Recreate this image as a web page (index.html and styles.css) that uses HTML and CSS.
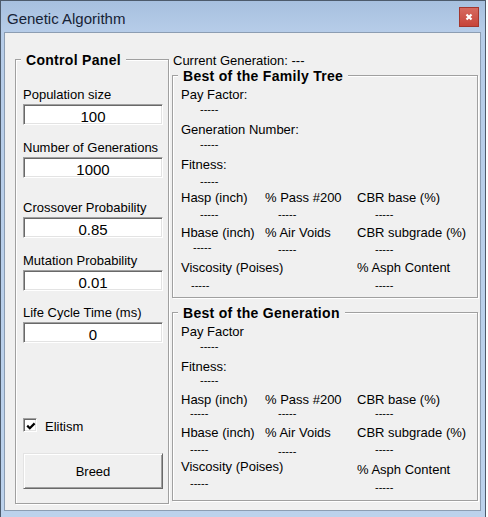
FILE: index.html
```html
<!DOCTYPE html>
<html>
<head>
<meta charset="utf-8">
<title>Genetic Algorithm</title>
<link rel="stylesheet" href="styles.css">
</head>
<body>
<div class="window">
  <div class="titlebar">
    <span class="title">Genetic Algorithm</span>
    <span class="close"><svg width="18" height="18" viewBox="0 0 18 18"><path d="M6.5 6.5 L11.5 11.5 M11.5 6.5 L6.5 11.5" stroke="#fff" stroke-width="2.2" fill="none"/></svg></span>
  </div>
  <div class="client">
    <section class="group control">
      <div class="group-title">Control Panel</div>
      <div class="field f1"><div class="flabel">Population size</div><div class="textbox">100</div></div>
      <div class="field f2"><div class="flabel">Number of Generations</div><div class="textbox">1000</div></div>
      <div class="field f3"><div class="flabel">Crossover Probability</div><div class="textbox">0.85</div></div>
      <div class="field f4"><div class="flabel">Mutation Probability</div><div class="textbox">0.01</div></div>
      <div class="field f5"><div class="flabel">Life Cycle Time (ms)</div><div class="textbox">0</div></div>
      <div class="check-row">
        <span class="checkbox"><svg width="10" height="10" viewBox="0 0 10 10"><path d="M1.2 4.6 L3.8 7.2 L8.6 2.4" stroke="#000" stroke-width="2.2" fill="none"/></svg></span>
        <span class="check-label">Elitism</span>
      </div>
      <button class="btn">Breed</button>
    </section>

    <div class="results">
      <div class="cur-gen">Current Generation: ---</div>

      <section class="group family">
        <div class="group-title">Best of the Family Tree</div>
        <div class="stat mt2"><div class="lbl">Pay Factor:</div><div class="val ind19">-----</div></div>
        <div class="stat mt5"><div class="lbl">Generation Number:</div><div class="val ind19">-----</div></div>
        <div class="stat mt5"><div class="lbl">Fitness:</div><div class="val ind19 mt2">-----</div></div>
        <div class="row3 mt1">
          <div class="lbl">Hasp (inch)</div><div class="lbl">% Pass #200</div><div class="lbl">CBR base (%)</div>
          <div class="val ind19 mt2">-----</div><div class="val ind13 mt2">-----</div><div class="val ind18 mt2">-----</div>
        </div>
        <div class="row3 mt3">
          <div class="lbl">Hbase (inch)</div><div class="lbl">% Air Voids</div><div class="lbl">CBR subgrade (%)</div>
          <div class="val ind12">-----</div><div class="val ind13 mt2">-----</div><div class="val ind18 mt2">-----</div>
        </div>
        <div class="row3 mt3">
          <div class="lbl span2">Viscosity (Poises)</div><div class="lbl">% Asph Content</div>
          <div class="val ind10 mt3">-----</div><div class="val ind18 mt3 c3">-----</div>
        </div>
      </section>

      <section class="group generation">
        <div class="group-title">Best of the Generation</div>
        <div class="stat mt2"><div class="lbl">Pay Factor</div><div class="val ind19">-----</div></div>
        <div class="stat mt5"><div class="lbl">Fitness:</div><div class="val ind19 mn1">-----</div></div>
        <div class="row3 mt4">
          <div class="lbl">Hasp (inch)</div><div class="lbl">% Pass #200</div><div class="lbl">CBR base (%)</div>
          <div class="val ind9 mn1">-----</div><div class="val ind13 mn1">-----</div><div class="val ind18 mn1">-----</div>
        </div>
        <div class="row3 mt4">
          <div class="lbl">Hbase (inch)</div><div class="lbl">% Air Voids</div><div class="lbl">CBR subgrade (%)</div>
          <div class="val ind9 mt2">-----</div><div class="val ind13 mt4">-----</div><div class="val ind18 mt2">-----</div>
        </div>
        <div class="row3">
          <div class="lbl span2">Viscosity (Poises)</div><div class="lbl mt3">% Asph Content</div>
          <div class="val ind9 mn1">-----</div><div class="val ind18 mt3 c3">-----</div>
        </div>
      </section>
    </div>
  </div>
</div>
</body>
</html>
```

FILE: styles.css
```css
* { box-sizing: border-box; }

body {
  margin: 0;
  background: #ffffff;
  font-family: "Liberation Sans", Arial, sans-serif;
  font-size: 13px;
  color: #000;
}

.window {
  width: 486px;
  height: 518px;
  border: 1px solid #4d5b6c;
  background: linear-gradient(to bottom, #a7c0df 0px, #b6cce8 30px, #bcd2ec 100%);
  display: flex;
  flex-direction: column;
  overflow: hidden;
}

.titlebar {
  height: 31px;
  flex: none;
  display: flex;
  align-items: flex-start;
  padding: 0 6px 0 6px;
}

.title {
  flex: 1;
  margin-top: 9px;
  font-size: 15px;
  line-height: 17px;
  color: #172336;
}

.close {
  margin-top: 6px;
  width: 20px;
  height: 20px;
  display: flex;
  align-items: center;
  justify-content: center;
  background: linear-gradient(to bottom, #d66a60, #c7443a);
  border: 1px solid #a3362e;
}

.client {
  margin: 0 4px 0 3px;
  height: 479px;
  flex: none;
  background: #f0f0f0;
  border: 1px solid #8c9db2;
  display: flex;
  align-items: flex-start;
}

/* etched group boxes */
.group {
  border: 1px solid #a0a0a0;
  box-shadow: inset 1px 1px 0 #fff, 1px 1px 0 #fff;
  display: flex;
  flex-direction: column;
}

.group-title {
  align-self: flex-start;
  margin-top: -8px;
  height: 17px;
  line-height: 17px;
  padding: 0 5px;
  background: #f0f0f0;
  font-size: 14px;
  font-weight: bold;
  letter-spacing: 0.3px;
}

/* control panel */
.control {
  margin: 26px 0 0 10px;
  width: 154px;
  height: 445px;
  padding: 0 5px 14px 7px;
}
.control .group-title { margin-left: -2px; }

.field { display: flex; flex-direction: column; }
.f1 { margin-top: 18px; }
.f2 { margin-top: 15px; }
.f3 { margin-top: 22px; }
.f4 { margin-top: 15px; }
.f5 { margin-top: 14px; }

.flabel {
  line-height: 15px;
  margin-bottom: 2px;
  white-space: nowrap;
}

.textbox {
  width: 140px;
  height: 21px;
  background: #fff;
  border-top: 1px solid #a0a0a0;
  border-left: 1px solid #a0a0a0;
  border-bottom: 1px solid #ffffff;
  border-right: 1px solid #ffffff;
  box-shadow: inset 1px 1px 0 #696969, inset -1px -1px 0 #e3e3e3;
  text-align: center;
  font-size: 15px;
  line-height: 17px;
  padding-top: 3px;
  overflow: hidden;
}

.check-row {
  margin-top: auto;
  height: 14px;
  margin-bottom: 21px;
  display: flex;
  align-items: center;
}

.checkbox {
  width: 14px;
  height: 14px;
  background: #fff;
  border-top: 1px solid #a0a0a0;
  border-left: 1px solid #a0a0a0;
  border-bottom: 1px solid #fff;
  border-right: 1px solid #fff;
  box-shadow: inset 1px 1px 0 #696969, inset -1px -1px 0 #e3e3e3;
  display: flex;
  align-items: center;
  justify-content: center;
  padding: 1px 0 0 1px;
}

.check-label {
  margin-left: 8px;
  line-height: 15px;
  padding-top: 2px;
}

.btn {
  width: 140px;
  height: 36px;
  margin: 0;
  padding: 0;
  font-family: "Liberation Sans", Arial, sans-serif;
  font-size: 13px;
  color: #000;
  background: #f0f0f0;
  border-top: 1px solid #e3e3e3;
  border-left: 1px solid #e3e3e3;
  border-bottom: 1px solid #696969;
  border-right: 1px solid #696969;
  box-shadow: inset 1px 1px 0 #fff, inset -1px -1px 0 #a0a0a0;
}

/* results column */
.results {
  margin: 20px 0 0 3px;
  width: 306px;
}

.cur-gen {
  line-height: 15px;
  padding-left: 1px;
}

.family {
  margin-top: 7px;
  height: 223px;
  padding: 0 8px;
}

.generation {
  margin-top: 14px;
  height: 189px;
  padding: 0 8px;
}

.results .group-title { margin-left: -3px; }

.lbl {
  line-height: 15px;
  white-space: nowrap;
}

.val {
  font-size: 11px;
  line-height: 15px;
  white-space: nowrap;
}

.row3 {
  display: grid;
  grid-template-columns: 84px 92px 1fr;
  align-items: start;
}

.span2 { grid-column: span 2; }
.c3 { grid-column: 3; }

.ind9 { padding-left: 9px; }
.ind10 { padding-left: 10px; }
.ind12 { padding-left: 12px; }
.ind13 { padding-left: 13px; }
.ind18 { padding-left: 18px; }
.ind19 { padding-left: 19px; }

.mt1 { margin-top: 1px; }
.mt2 { margin-top: 2px; }
.mt3 { margin-top: 3px; }
.mt4 { margin-top: 4px; }
.mt5 { margin-top: 5px; }
.mt6 { margin-top: 6px; }
.mn1 { margin-top: -1px; }
.mn2 { margin-top: -2px; }
.mn3 { margin-top: -3px; }
```
